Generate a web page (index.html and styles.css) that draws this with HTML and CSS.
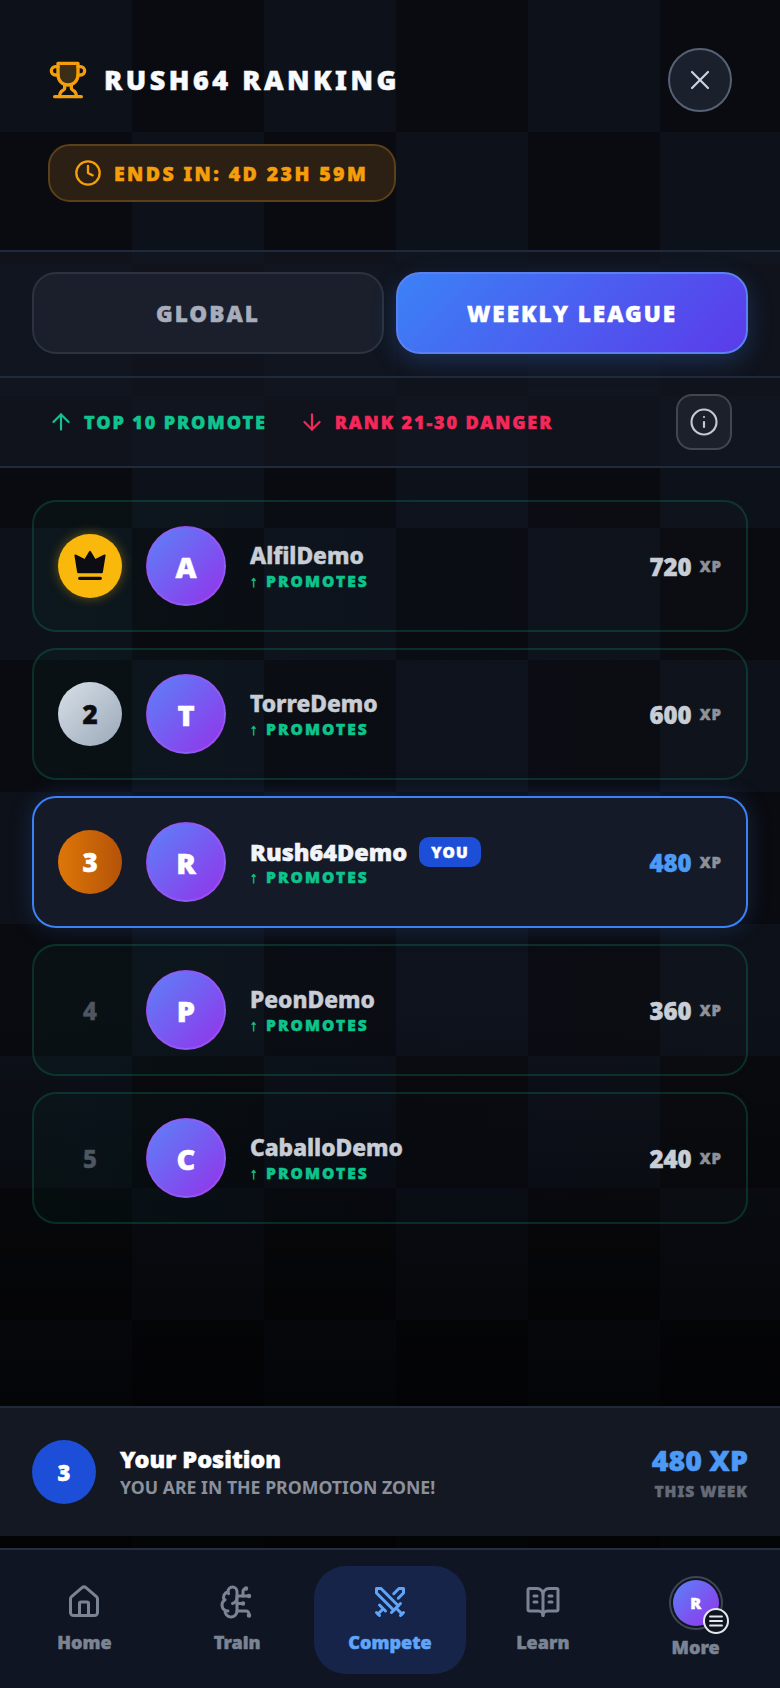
FILE: index.html
```html
<!DOCTYPE html>
<html lang="en">
<head>
    <meta charset="UTF-8">
    <meta name="viewport" content="width=device-width, initial-scale=1.0">
    <title>Rush64 Ranking</title>
    <link rel="stylesheet" href="styles.css">
</head>
<body>
    <div class="page">
        <!-- header -->
        <header class="header">
            <div class="header-row">
                <div class="title-wrap">
                    <svg class="icon trophy" viewBox="0 0 24 24"><path class="cup" d="M18 2H6v7a6 6 0 0 0 12 0V2Z"/><path d="M6 9H4.5a2.5 2.5 0 0 1 0-5H6"/><path d="M18 9h1.5a2.5 2.5 0 0 0 0-5H18"/><path d="M4 22h16"/><path d="M10 14.66V17c0 .55-.47.98-.97 1.21C7.85 18.75 7 20.24 7 22"/><path d="M14 14.66V17c0 .55.47.98.97 1.21C16.15 18.75 17 20.24 17 22"/></svg>
                    <h1>RUSH64 RANKING</h1>
                </div>
                <button class="close-btn"><svg class="icon" viewBox="0 0 24 24"><path d="M18 6 6 18"/><path d="m6 6 12 12"/></svg></button>
            </div>
            <div class="timer">
                <svg class="icon" viewBox="0 0 24 24"><circle cx="12" cy="12" r="10"/><polyline points="12 6 12 12 16 14"/></svg>
                ENDS IN: 4D 23H 59M
            </div>
        </header>

        <!-- tabs -->
        <div class="tabs">
            <button class="tab">GLOBAL</button>
            <button class="tab active">WEEKLY LEAGUE</button>
        </div>

        <!-- legend -->
        <div class="legend">
            <span class="legend-item up"><svg class="icon" viewBox="0 0 24 24"><path d="m5 12 7-7 7 7"/><path d="M12 19V5"/></svg>TOP 10 PROMOTE</span>
            <span class="legend-item down"><svg class="icon" viewBox="0 0 24 24"><path d="M12 5v14"/><path d="m19 12-7 7-7-7"/></svg>RANK 21-30 DANGER</span>
            <button class="info-btn"><svg class="icon" viewBox="0 0 24 24"><circle cx="12" cy="12" r="10"/><path d="M12 16v-4"/><path d="M12 8h.01"/></svg></button>
        </div>

        <!-- list -->
        <main class="list">
            <div class="card">
                <div class="rank gold"><svg class="crown" viewBox="0 0 24 24"><path d="M12 4.200l2.800 4.600 5.200-2.600-1.500 9.300h-13L4 6.200l5.200 2.600z" stroke="#0b0d12" stroke-width="1" stroke-linejoin="round"/><rect x="5.500" y="17.800" width="13" height="1.800" rx=".9"/></svg></div>
                <div class="avatar">A</div>
                <div class="info">
                    <div class="name">AlfilDemo</div>
                    <div class="promo">↑ PROMOTES</div>
                </div>
                <div class="xp"><b>720</b><span>XP</span></div>
            </div>
            <div class="card">
                <div class="rank silver">2</div>
                <div class="avatar">T</div>
                <div class="info">
                    <div class="name">TorreDemo</div>
                    <div class="promo">↑ PROMOTES</div>
                </div>
                <div class="xp"><b>600</b><span>XP</span></div>
            </div>
            <div class="card me">
                <div class="rank bronze">3</div>
                <div class="avatar">R</div>
                <div class="info">
                    <div class="name">Rush64Demo <em class="you">YOU</em></div>
                    <div class="promo">↑ PROMOTES</div>
                </div>
                <div class="xp"><b>480</b><span>XP</span></div>
            </div>
            <div class="card">
                <div class="rank plain">4</div>
                <div class="avatar">P</div>
                <div class="info">
                    <div class="name">PeonDemo</div>
                    <div class="promo">↑ PROMOTES</div>
                </div>
                <div class="xp"><b>360</b><span>XP</span></div>
            </div>
            <div class="card">
                <div class="rank plain">5</div>
                <div class="avatar">C</div>
                <div class="info">
                    <div class="name">CaballoDemo</div>
                    <div class="promo">↑ PROMOTES</div>
                </div>
                <div class="xp"><b>240</b><span>XP</span></div>
            </div>
        </main>

        <!-- your position -->
        <section class="position">
            <div class="pos-rank">3</div>
            <div class="pos-text">
                <div class="pos-title">Your Position</div>
                <div class="pos-sub">YOU ARE IN THE PROMOTION ZONE!</div>
            </div>
            <div class="pos-xp">
                <div class="pos-value">480 XP</div>
                <div class="pos-week">THIS WEEK</div>
            </div>
        </section>

        <!-- bottom nav -->
        <nav class="nav">
            <a class="nav-item">
                <svg class="icon" viewBox="0 0 24 24"><path d="M15 21v-8a1 1 0 0 0-1-1h-4a1 1 0 0 0-1 1v8"/><path d="M3 10a2 2 0 0 1 .709-1.528l7-5.999a2 2 0 0 1 2.582 0l7 5.999A2 2 0 0 1 21 10v9a2 2 0 0 1-2 2H5a2 2 0 0 1-2-2z"/></svg>
                Home
            </a>
            <a class="nav-item">
                <svg class="icon" viewBox="0 0 24 24"><path d="M12 5a3 3 0 1 0-5.997.125 4 4 0 0 0-2.526 5.77 4 4 0 0 0 .556 6.588A4 4 0 1 0 12 18Z"/><path d="M9 13a4.500 4.500 0 0 0 3-4"/><path d="M6.003 5.125A3 3 0 0 0 6.401 6.500"/><path d="M3.477 10.896a4 4 0 0 1 .585-.396"/><path d="M6 18a4 4 0 0 1-1.967-.516"/><path d="M12 13h4"/><path d="M12 18h6a2 2 0 0 1 2 2v1"/><path d="M12 8h8"/><path d="M16 8V5a2 2 0 0 1 2-2"/><circle cx="16" cy="13" r=".5"/><circle cx="18" cy="3" r=".5"/><circle cx="20" cy="21" r=".5"/><circle cx="20" cy="8" r=".5"/></svg>
                Train
            </a>
            <a class="nav-item active">
                <svg class="icon" viewBox="0 0 24 24"><polyline points="14.500 17.500 3 6 3 3 6 3 17.500 14.500"/><line x1="13" x2="19" y1="19" y2="13"/><line x1="16" x2="20" y1="16" y2="20"/><line x1="19" x2="21" y1="21" y2="19"/><polyline points="14.500 6.500 18 3 21 3 21 6 17.500 9.500"/><line x1="5" x2="9" y1="14" y2="18"/><line x1="7" x2="4" y1="17" y2="20"/><line x1="3" x2="5" y1="19" y2="21"/></svg>
                Compete
            </a>
            <a class="nav-item">
                <svg class="icon" viewBox="0 0 24 24"><path d="M12 7v14"/><path d="M16 12h2"/><path d="M16 8h2"/><path d="M3 18a1 1 0 0 1-1-1V4a1 1 0 0 1 1-1h5a4 4 0 0 1 4 4 4 4 0 0 1 4-4h5a1 1 0 0 1 1 1v13a1 1 0 0 1-1 1h-6a3 3 0 0 0-3 3 3 3 0 0 0-3-3z"/><path d="M6 12h2"/><path d="M6 8h2"/></svg>
                Learn
            </a>
            <a class="nav-item more">
                <span class="nav-avatar">
                    <span class="nav-avatar-in">R</span>
                    <span class="menu-badge"><svg viewBox="0 0 24 24"><path d="M4 6h16"/><path d="M4 12h16"/><path d="M4 18h16"/></svg></span>
                </span>
                More
            </a>
        </nav>
    </div>
</body>
</html>
```

FILE: styles.css
```css
* {
    box-sizing: border-box;
    font-family: "Noto Sans", "Open Sans", sans-serif;
}

body {
    margin: 0;
    background: #000;
    color: #fff;
}

button {
    border: none;
    cursor: pointer;
    padding: 0;
}

.icon {
    fill: none;
    stroke: currentColor;
    stroke-width: 2;
    stroke-linecap: round;
    stroke-linejoin: round;
}

/* the heaviest installed weight is still lighter than the design */
h1, .timer, .tab, .legend-item, .rank, .avatar, .name, .you, .promo, .xp b, .xp span,
.pos-rank, .pos-title, .pos-value, .pos-week, .nav-item, .nav-avatar-in {
    -webkit-text-stroke: 0.5px currentColor;
}

/* page, faint chess board behind everything */
.page {
    width: 780px;
    height: 1688px;
    display: flex;
    flex-direction: column;
    background:
        linear-gradient(180deg, rgba(0,0,0,0) 0, rgba(0,0,0,0) 1000px, rgba(0,0,0,0.7) 1400px),
        conic-gradient(#0d1119 25%, #0a0b10 0 50%, #0d1119 0 75%, #0a0b10 0) 132px 0 / 264px 264px,
        #0a0b10;
}

/* header */
.header {
    height: 250px;
    padding: 48px 48px 0;
}

.header-row {
    display: flex;
    align-items: center;
    justify-content: space-between;
}

.title-wrap {
    display: flex;
    align-items: center;
    gap: 16px;
}

.trophy {
    width: 40px;
    height: 40px;
    color: #f59e0b;
}

.trophy .cup {
    fill: rgba(245,158,11,0.2);
}

h1 {
    margin: 0;
    font-size: 27px;
    line-height: 36px;
    font-weight: 900;
    letter-spacing: 3.5px;
    color: #f8fafc;
}

.close-btn {
    width: 64px;
    height: 64px;
    border-radius: 50%;
    background: #1a202c;
    border: 2px solid #566274;
    color: #cbd5e1;
    display: flex;
    align-items: center;
    justify-content: center;
}

.close-btn .icon {
    width: 32px;
    height: 32px;
    stroke-width: 1.6;
}

.timer {
    margin-top: 32px;
    width: 348px;
    height: 58px;
    border-radius: 22px;
    border: 2px solid #5c4017;
    background: #2b2013;
    color: #f59e0b;
    font-size: 19.5px;
    font-weight: 900;
    letter-spacing: 2.4px;
    display: flex;
    align-items: center;
    gap: 12px;
    padding-left: 24px;
    white-space: nowrap;
}

.timer .icon {
    width: 28px;
    height: 28px;
    flex: none;
    -webkit-text-stroke: 0;
}

/* tabs */
.tabs {
    height: 126px;
    flex: none;
    padding: 20px 32px 0;
    display: flex;
    gap: 12px;
    border-top: 2px solid #1f2a3c;
    background: rgba(18,23,34,0.7);
}

.tab {
    flex: 1;
    height: 82px;
    border-radius: 24px;
    border: 2px solid #2b3240;
    background: #1a1f2b;
    color: #a7adbb;
    font-size: 22.5px;
    font-weight: 900;
    letter-spacing: 2px;
}

.tab.active {
    border-color: #5b80f2;
    background: linear-gradient(135deg, #3b82f6, #5b3bea);
    color: #fff;
    box-shadow: 0 8px 24px rgba(59,130,246,0.25);
}

/* legend */
.legend {
    height: 92px;
    flex: none;
    padding: 0 48px;
    display: flex;
    align-items: center;
    gap: 32px;
    border-top: 2px solid #1f2a3c;
    border-bottom: 2px solid #1f2a3c;
    background: rgba(18,23,34,0.7);
}

.legend-item {
    display: flex;
    align-items: center;
    gap: 12px;
    font-size: 18px;
    font-weight: 900;
    letter-spacing: 1.9px;
    white-space: nowrap;
}

.legend-item .icon {
    width: 26px;
    height: 26px;
    margin-right: -2px;
}

.legend-item.up { color: #10c48f; }
.legend-item.down { color: #f4285a; }

.info-btn {
    margin-left: auto;
    width: 56px;
    height: 56px;
    border-radius: 16px;
    background: #1c202a;
    border: 2px solid #42464f;
    color: #c5c9d1;
    display: flex;
    align-items: center;
    justify-content: center;
}

.info-btn .icon {
    width: 30px;
    height: 30px;
    stroke-width: 1.7;
}

/* list */
.list {
    flex: 1;
    padding: 32px 32px 0;
    display: flex;
    flex-direction: column;
    gap: 16px;
}

.card {
    height: 132px;
    flex: none;
    display: flex;
    align-items: center;
    padding: 0 24px;
    border-radius: 24px;
    border: 2px solid rgba(16,185,129,0.2);
    background: linear-gradient(90deg, rgba(16,185,129,0.04), rgba(59,130,246,0.02) 50%, rgba(255,255,255,0.01));
}

.card.me {
    border-color: #3b82f6;
    background: #141a28;
    box-shadow: 0 0 24px rgba(59,130,246,0.2);
}

.rank {
    width: 64px;
    height: 64px;
    border-radius: 50%;
    display: flex;
    align-items: center;
    justify-content: center;
    font-size: 26px;
    font-weight: 900;
    flex: none;
}

.rank.gold {
    background: #fbb80c;
    box-shadow: 0 0 12px rgba(251,184,12,0.4);
}

.crown {
    width: 44px;
    height: 44px;
    fill: #0b0d12;
}

.rank.silver {
    background: linear-gradient(135deg, #d8e0e8, #9aa8b8);
    color: #0b0d12;
}

.rank.bronze {
    background: linear-gradient(90deg, #de7607, #b45309);
    color: #fff;
}

.rank.plain {
    font-size: 24px;
    font-weight: 800;
    color: #4f5661;
}

.avatar {
    width: 80px;
    height: 80px;
    margin-left: 24px;
    border-radius: 50%;
    border: 2px solid rgba(168,85,247,0.6);
    background: linear-gradient(135deg, #5b82f8, #9333ea);
    display: flex;
    align-items: center;
    justify-content: center;
    font-size: 29px;
    font-weight: 900;
    flex: none;
}

.info {
    margin-left: 24px;
    flex: 1;
}

.name {
    font-size: 22.8px;
    line-height: 30px;
    font-weight: 800;
    color: #c9ced6;
    display: flex;
    align-items: center;
    gap: 12px;
}

.card.me .name {
    color: #f1f5f9;
    font-size: 23.5px;
    font-weight: 900;
}

.you {
    font-style: normal;
    font-size: 15.5px;
    font-weight: 900;
    letter-spacing: 1.2px;
    line-height: 30px;
    padding: 0 12px;
    border-radius: 10px;
    background: #1d4ed8;
    color: #fff;
}

.promo {
    font-size: 15.5px;
    line-height: 20px;
    font-weight: 900;
    letter-spacing: 2.1px;
    color: #0ec48d;
}

.xp {
    display: flex;
    align-items: baseline;
    gap: 8px;
    color: #c9ced6;
}

.xp b {
    font-size: 24px;
    font-weight: 900;
}

.xp span {
    font-size: 15px;
    font-weight: 900;
    letter-spacing: 1px;
    color: #8d9199;
    position: relative;
    top: -4px;
}

.card.me .xp b {
    color: #4c9af5;
}

/* your position */
.position {
    height: 130px;
    flex: none;
    margin-bottom: 12px;
    padding: 0 32px;
    display: flex;
    align-items: center;
    border-top: 2px solid #1e2a38;
    background: #141823;
}

.pos-rank {
    width: 64px;
    height: 64px;
    border-radius: 50%;
    background: #1d4ed8;
    display: flex;
    align-items: center;
    justify-content: center;
    font-size: 22px;
    font-weight: 900;
    flex: none;
}

.pos-text {
    margin-left: 24px;
    flex: 1;
}

.pos-title {
    font-size: 23.5px;
    line-height: 30px;
    font-weight: 900;
}

.pos-sub {
    font-size: 17.7px;
    line-height: 26px;
    font-weight: 700;
    color: #8b909b;
}

.pos-xp {
    text-align: right;
}

.pos-value {
    font-size: 28.5px;
    line-height: 38px;
    font-weight: 900;
    color: #4c9af5;
}

.pos-week {
    font-size: 15.5px;
    line-height: 24px;
    font-weight: 900;
    letter-spacing: 1px;
    color: #666b78;
}

/* bottom nav */
.nav {
    height: 140px;
    flex: none;
    padding: 16px 8px 14px;
    display: grid;
    grid-template-columns: repeat(5, 1fr);
    border-top: 2px solid #262d3c;
    background: #0f1522;
}

.nav-item {
    display: flex;
    flex-direction: column;
    align-items: center;
    padding-top: 18px;
    gap: 10px;
    border-radius: 32px;
    font-size: 18px;
    line-height: 24px;
    font-weight: 900;
    color: #7a8494;
}

.nav-item .icon {
    width: 36px;
    height: 36px;
}

.nav-item.active {
    background: #16244a;
    color: #60a5fa;
}

.nav-item.more {
    padding-top: 10px;
    gap: 5px;
}

.nav-avatar {
    position: relative;
    width: 54px;
    height: 54px;
    border-radius: 50%;
    border: 2px solid #404754;
    padding: 2px;
}

.nav-avatar-in {
    width: 100%;
    height: 100%;
    border-radius: 50%;
    background: linear-gradient(135deg, #5b82f8, #9333ea);
    color: #fff;
    display: flex;
    align-items: center;
    justify-content: center;
    font-size: 16px;
    font-weight: 900;
}

.menu-badge {
    position: absolute;
    right: -8px;
    bottom: -6px;
    width: 26px;
    height: 26px;
    border-radius: 50%;
    background: #10141d;
    border: 2px solid #e2e8f0;
    display: flex;
    align-items: center;
    justify-content: center;
}

.menu-badge svg {
    width: 18px;
    height: 18px;
    stroke: #e2e8f0;
    stroke-width: 2.5;
    stroke-linecap: round;
}
```
